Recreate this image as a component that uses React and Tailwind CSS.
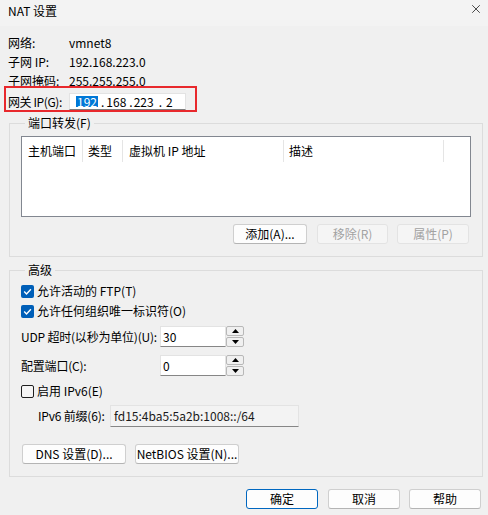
import { X } from "lucide-react";

function Check() {
  return (
    <span className="flex h-[13px] w-[13px] items-center justify-center rounded-[2px] bg-[#005fb8]">
      <svg width="11" height="11" viewBox="0 0 11 11">
        <path d="M2.2 5.6 L4.5 7.9 L8.9 3.2" fill="none" stroke="#fff" strokeWidth="1.4" />
      </svg>
    </span>
  );
}

function Box() {
  return <span className="h-[13px] w-[13px] rounded-[2px] border border-[#1f1f1f] bg-[#f5f5f5]" />;
}

function Btn({ children, w, disabled, primary, className = "" }) {
  const tone = disabled
    ? "border-[#e3e3e3] bg-[#f5f5f5] text-[#a2a2a2]"
    : primary
    ? "border-[#0067c0] bg-[#fdfdfd] text-black"
    : "border-[#cfcfcf] border-b-[#b4b4b4] bg-[#fdfdfd] text-black";
  return (
    <button
      type="button"
      className={`flex h-[20px] items-center justify-center whitespace-nowrap rounded-[3px] border leading-[16px] ${tone} ${w} ${className}`}
    >
      {children}
    </button>
  );
}

function Spinner() {
  return (
    <div className="flex h-[21px] w-[18px] flex-col gap-[1px]">
      <span className="flex h-[10px] items-center justify-center rounded-[2px] border border-[#b8b8b8] bg-[#f0f0f0]">
        <svg width="7" height="4" viewBox="0 0 7 4">
          <path d="M0 4 L3.5 0 L7 4 Z" fill="#000" />
        </svg>
      </span>
      <span className="flex h-[10px] items-center justify-center rounded-[2px] border border-[#b8b8b8] bg-[#f0f0f0]">
        <svg width="7" height="4" viewBox="0 0 7 4">
          <path d="M0 0 L7 0 L3.5 4 Z" fill="#000" />
        </svg>
      </span>
    </div>
  );
}

function SpinField({ label, value, className = "" }) {
  return (
    <div className={`flex h-[21px] items-center ${className}`}>
      <span className="w-[139px] shrink-0 whitespace-nowrap leading-[16px] tracking-[-0.2px]">{label}</span>
      <div className="flex h-[21px] w-[66px] items-center border border-[#e3e3e3] border-b-[#868686] bg-white pl-[2px] leading-[16px]">
        {value}
      </div>
      <Spinner />
    </div>
  );
}

export default function App() {
  return (
    <div className="flex h-[515px] w-[488px] flex-col overflow-hidden whitespace-nowrap bg-[#f0f0f0] font-['Noto_Sans_CJK_SC','Noto_Sans',sans-serif] text-[12px] text-black">
      <div className="flex h-[26px] shrink-0 items-start justify-between bg-[#f3f3f3] pl-[8px] pr-[5px] pt-[3px]">
        <span className="leading-[16px]">NAT 设置</span>
        <X className="mt-[-1px] h-[14px] w-[14px]" strokeWidth={1.2} />
      </div>

      <div className="mt-[7px] flex flex-col pl-[8px]">
        <div className="flex h-[19px] leading-[19px]">
          <span className="w-[61px]">网络:</span>
          <span>vmnet8</span>
        </div>
        <div className="flex h-[19px] leading-[19px]">
          <span className="w-[61px]">子网 IP:</span>
          <span>192.168.223.0</span>
        </div>
        <div className="flex h-[15px] leading-[19px]">
          <span className="w-[61px]">子网掩码:</span>
          <span>255.255.255.0</span>
        </div>
      </div>

      <div className="ml-[4px] flex h-[26px] w-[193px] items-center border-2 border-[#e8282c] pt-[5px]">
        <span className="w-[63px] shrink-0 pl-[2px] leading-[16px] tracking-[-0.4px]">网关 IP(G):</span>
        <div className="flex h-[17px] w-[117px] items-center border border-[#e3e3e3] border-b-[#7d7d7d] bg-white pl-[6px] leading-[16px]">
          <span className="bg-[#0078d7] px-[1px] leading-[11px] text-white">192</span>
          <span className="ml-[3px]">.</span>
          <span className="ml-[2px]">168</span>
          <span className="ml-[3px]">.</span>
          <span className="ml-[1px]">223</span>
          <span className="ml-[5px]">.</span>
          <span className="ml-[4px]">2</span>
        </div>
      </div>

      <fieldset className="ml-[9px] mt-[3px] w-[474px] border border-[#dcdcdc] px-[11px] pb-[12px]">
        <legend className="ml-[4px] px-[3px] leading-[16px]">端口转发(F)</legend>
        <div className="mt-[5px] h-[81px] w-[450px] border border-[#828790] bg-white">
          <div className="flex h-[25px] items-center pt-[2px] leading-[16px]">
            <span className="w-[61px] border-r border-[#e5e5e5] pl-[6px] leading-[22px]">主机端口</span>
            <span className="w-[40px] border-r border-[#e5e5e5] pl-[5px] leading-[22px]">类型</span>
            <span className="w-[161px] border-r border-[#e5e5e5] pl-[6px] leading-[22px]">虚拟机 IP 地址</span>
            <span className="w-[160px] border-r border-[#e5e5e5] pl-[5px] leading-[22px]">描述</span>
          </div>
        </div>
        <div className="mt-[7px] flex justify-end pr-[2px]">
          <Btn w="w-[74px]" className="mr-[10px]">添加(A)...</Btn>
          <Btn w="w-[71px]" className="mr-[9px]" disabled>移除(R)</Btn>
          <Btn w="w-[72px]" disabled>属性(P)</Btn>
        </div>
      </fieldset>

      <fieldset className="ml-[9px] mt-[5px] w-[474px] border border-[#dcdcdc] px-[11px] pb-[12px]">
        <legend className="ml-[4px] px-[3px] leading-[16px]">高级</legend>
        <div className="mt-[3px] flex h-[20px] items-center gap-[3px]">
          <Check />
          <span className="leading-[16px]">允许活动的 FTP(T)</span>
        </div>
        <div className="flex h-[20px] items-center gap-[3px]">
          <Check />
          <span className="leading-[16px]">允许任何组织唯一标识符(O)</span>
        </div>
        <SpinField className="mt-[5px]" label="UDP 超时(以秒为单位)(U):" value="30" />
        <SpinField className="mt-[8px]" label="配置端口(C):" value="0" />
        <div className="mt-[5px] flex h-[20px] items-center gap-[3px]">
          <Box />
          <span className="leading-[16px]">启用 IPv6(E)</span>
        </div>
        <div className="mt-[4px] flex h-[22px] items-center pl-[17px]">
          <span className="w-[72px] shrink-0 leading-[16px] tracking-[-0.2px]">IPv6 前缀(6):</span>
          <div className="flex h-[22px] w-[189px] items-center border border-[#e3e3e3] border-b-[#868686] bg-[#f3f3f3] pl-[3px] leading-[16px] text-[#1a1a1a]">
            fd15:4ba5:5a2b:1008::/64
          </div>
        </div>
        <div className="mt-[17px] flex gap-[9px] pl-[1px]">
          <Btn w="w-[104px]">DNS 设置(D)...</Btn>
          <Btn w="w-[104px]">NetBIOS 设置(N)...</Btn>
        </div>
      </fieldset>

      <div className="mt-[12px] flex justify-end pr-[7px]">
        <Btn w="w-[72px]" className="mr-[10px]" primary>确定</Btn>
        <Btn w="w-[72px]" className="mr-[9px]">取消</Btn>
        <Btn w="w-[72px]">帮助</Btn>
      </div>
    </div>
  );
}
